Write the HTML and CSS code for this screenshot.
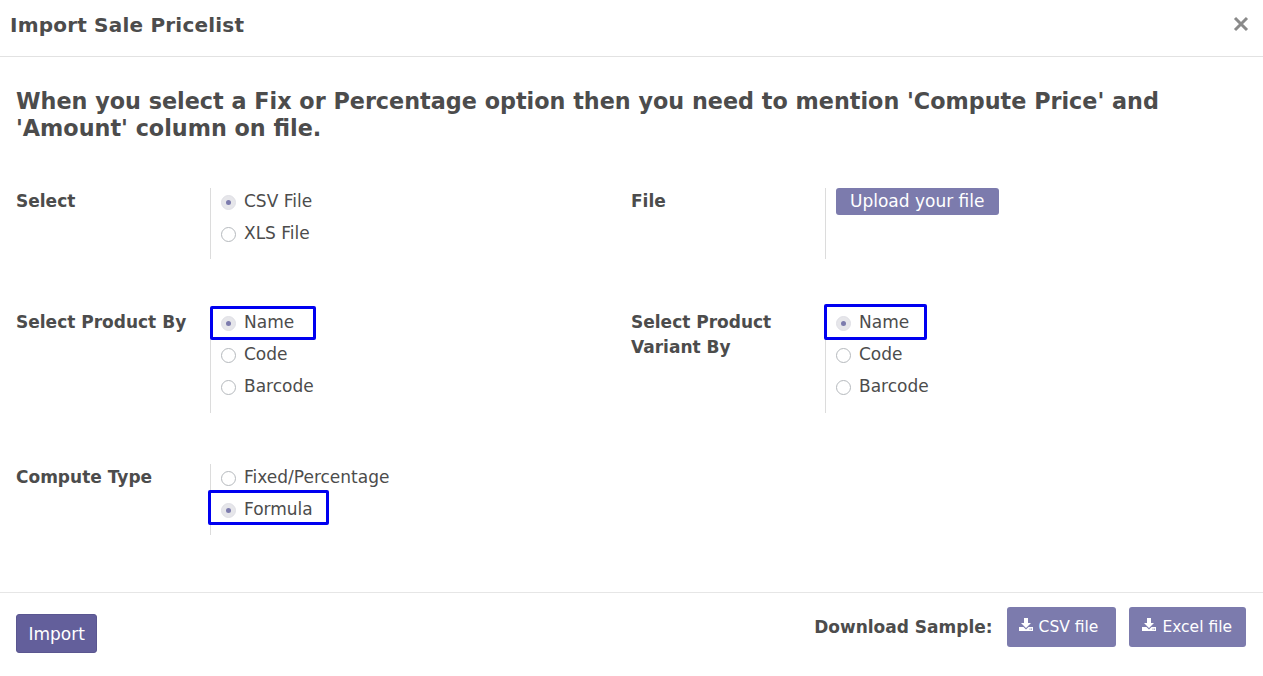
FILE: index.html
```html
<!DOCTYPE html>
<html>
<head>
<meta charset="utf-8">
<link rel="stylesheet" href="styles.css">
</head>
<body>
<div class="modal">
  <header class="modal-header">
    <h4 class="modal-title">Import Sale Pricelist</h4>
    <button class="close" aria-label="Close">
      <svg width="16" height="16" viewBox="0 0 16 16"><path d="M2 2L14 14M14 2L2 14" stroke="#8a8a8a" stroke-width="3" stroke-linecap="butt"/></svg>
    </button>
  </header>
  <main class="modal-body">
    <h3 class="note">When you select a Fix or Percentage option then you need to mention 'Compute Price' and 'Amount' column on file.</h3>
    <div class="grid">
      <div class="field">
        <div class="label">Select</div>
        <div class="group">
          <label class="opt"><span class="radio checked"></span>CSV File</label>
          <label class="opt"><span class="radio"></span>XLS File</label>
        </div>
      </div>
      <div class="field">
        <div class="label">File</div>
        <div class="group group-file">
          <button class="btn btn-upload">Upload your file</button>
        </div>
      </div>

      <div class="field">
        <div class="label">Select Product By</div>
        <div class="group group-tall">
          <label class="opt hl hl-a"><span class="radio checked"></span>Name</label>
          <label class="opt"><span class="radio"></span>Code</label>
          <label class="opt"><span class="radio"></span>Barcode</label>
        </div>
      </div>
      <div class="field">
        <div class="label">Select Product Variant By</div>
        <div class="group group-tall">
          <label class="opt hl hl-b"><span class="radio checked"></span>Name</label>
          <label class="opt"><span class="radio"></span>Code</label>
          <label class="opt"><span class="radio"></span>Barcode</label>
        </div>
      </div>

      <div class="field field-last">
        <div class="label">Compute Type</div>
        <div class="group">
          <label class="opt"><span class="radio"></span>Fixed/Percentage</label>
          <label class="opt hl hl-c"><span class="radio checked"></span>Formula</label>
        </div>
      </div>
      <div class="field field-last"></div>
    </div>
  </main>
  <footer class="modal-footer">
    <button class="btn btn-import">Import</button>
    <div class="samples">
      <span class="samples-label">Download Sample:</span>
      <button class="btn btn-dl btn-csv"><svg class="dl" width="14" height="14" viewBox="0 0 14 14"><path d="M5 0h4v5h3l-5 5-5-5h3z" fill="#fff"/><path d="M0 9h4.5l2.5 2.5 2.5-2.5H14v4H0z" fill="#fff"/><rect x="10.5" y="10.6" width="1" height="1" fill="#7c7bad"/><rect x="12" y="10.6" width="1" height="1" fill="#7c7bad"/></svg>CSV file</button>
      <button class="btn btn-dl btn-xls"><svg class="dl" width="14" height="14" viewBox="0 0 14 14"><path d="M5 0h4v5h3l-5 5-5-5h3z" fill="#fff"/><path d="M0 9h4.5l2.5 2.5 2.5-2.5H14v4H0z" fill="#fff"/><rect x="10.5" y="10.6" width="1" height="1" fill="#7c7bad"/><rect x="12" y="10.6" width="1" height="1" fill="#7c7bad"/></svg>Excel file</button>
    </div>
  </footer>
</div>
</body>
</html>
```
FILE: styles.css
```css
*, *::before, *::after { box-sizing: border-box; }
html, body {
  margin: 0;
  padding: 0;
  background: #fff;
}
body {
  font-family: "DejaVu Sans", "Liberation Sans", sans-serif;
  color: #4c4c4c;
  font-size: 17px;
}
.modal {
  width: 1263px;
  height: 676px;
  display: flex;
  flex-direction: column;
}
.modal-header {
  height: 57px;
  border-bottom: 1px solid #e2e2e2;
  display: flex;
  align-items: center;
  justify-content: space-between;
  padding: 0 14px 0 10px;
}
.modal-title {
  margin: 0;
  font-size: 20px;
  letter-spacing: 0.2px;
  font-weight: bold;
  color: #4c4c4c;
  position: relative;
  top: -3px;
}
.close {
  border: 0;
  background: none;
  padding: 0;
  width: 16px;
  height: 16px;
  position: relative;
  top: -4px;
  display: flex;
}
.modal-body {
  padding: 31px 16px 0;
  flex: 1;
}
.note {
  margin: 0 0 46px;
  font-size: 22.3px;
  font-weight: bold;
  line-height: 27px;
  color: #4c4c4c;
}
.grid {
  display: grid;
  grid-template-columns: 615px 615px;
  row-gap: 50px;
}
.field {
  display: flex;
}
.field-last {
  margin-top: 1px;
}
.label {
  width: 194px;
  flex: none;
  font-weight: bold;
  line-height: 25px;
  padding-top: 1px;
  padding-right: 16px;
}
.group {
  border-left: 1px solid #dcdcdc;
  padding: 1px 0 14px 10px;
  display: flex;
  flex-direction: column;
  align-items: flex-start;
  gap: 8px;
}
.group-tall {
  padding-bottom: 15px;
}
.group-file {
  padding: 0 0 6px 10px;
}
.opt {
  display: flex;
  align-items: center;
  height: 24px;
  line-height: 24px;
  color: #4c4c4c;
  position: relative;
}
.radio {
  width: 15px;
  height: 15px;
  border: 1px solid #b5b9bd;
  border-radius: 50%;
  margin-right: 8px;
  background: #fff;
  display: inline-flex;
  align-items: center;
  justify-content: center;
  position: relative;
  top: 1px;
}
.radio.checked {
  background: #e6e6ea;
  border-color: #e0e0e6;
}
.radio.checked::after {
  content: "";
  width: 5px;
  height: 5px;
  border-radius: 50%;
  background: #7c7bad;
}
.hl::before {
  content: "";
  position: absolute;
  border: 3px solid #0000f0;
  border-radius: 2px;
}
.hl-a::before { left: -11px; top: -4px; width: 106px; height: 34px; }
.hl-b::before { left: -12px; top: -6px; width: 103px; height: 36px; }
.hl-c::before { left: -13px; top: -7px; width: 121px; height: 35px; }
.btn {
  border: 0;
  border-radius: 3px;
  font-family: "DejaVu Sans", "Liberation Sans", sans-serif;
  font-size: 17px;
  color: #fff;
  cursor: pointer;
}
.btn-upload {
  background: #7c7bad;
  height: 27px;
  padding: 0 14px;
  line-height: 27px;
}
.modal-footer {
  height: 84px;
  border-top: 1px solid #e6e6e6;
  display: flex;
  justify-content: space-between;
  align-items: flex-start;
  padding: 0 17px 0 16px;
}
.btn-import {
  margin-top: 21px;
  background: #635f9b;
  height: 39px;
  padding: 0 11.5px;
  border: 1px solid #5a5690;
}
.samples {
  margin-top: 14px;
  display: flex;
  align-items: center;
  gap: 13px;
}
.samples-label {
  font-weight: bold;
  margin-right: 1px;
}
.btn-dl {
  background: #7c7bad;
  height: 40px;
  font-size: 15.5px;
  padding: 0 16px 0 12px;
  display: inline-flex;
  align-items: center;
}
.btn-csv {
  padding: 0 18px 0 12px;
}
.btn-xls {
  padding: 0 14px 0 13px;
}
.dl {
  margin-right: 6px;
  position: relative;
  top: -2px;
}
```
